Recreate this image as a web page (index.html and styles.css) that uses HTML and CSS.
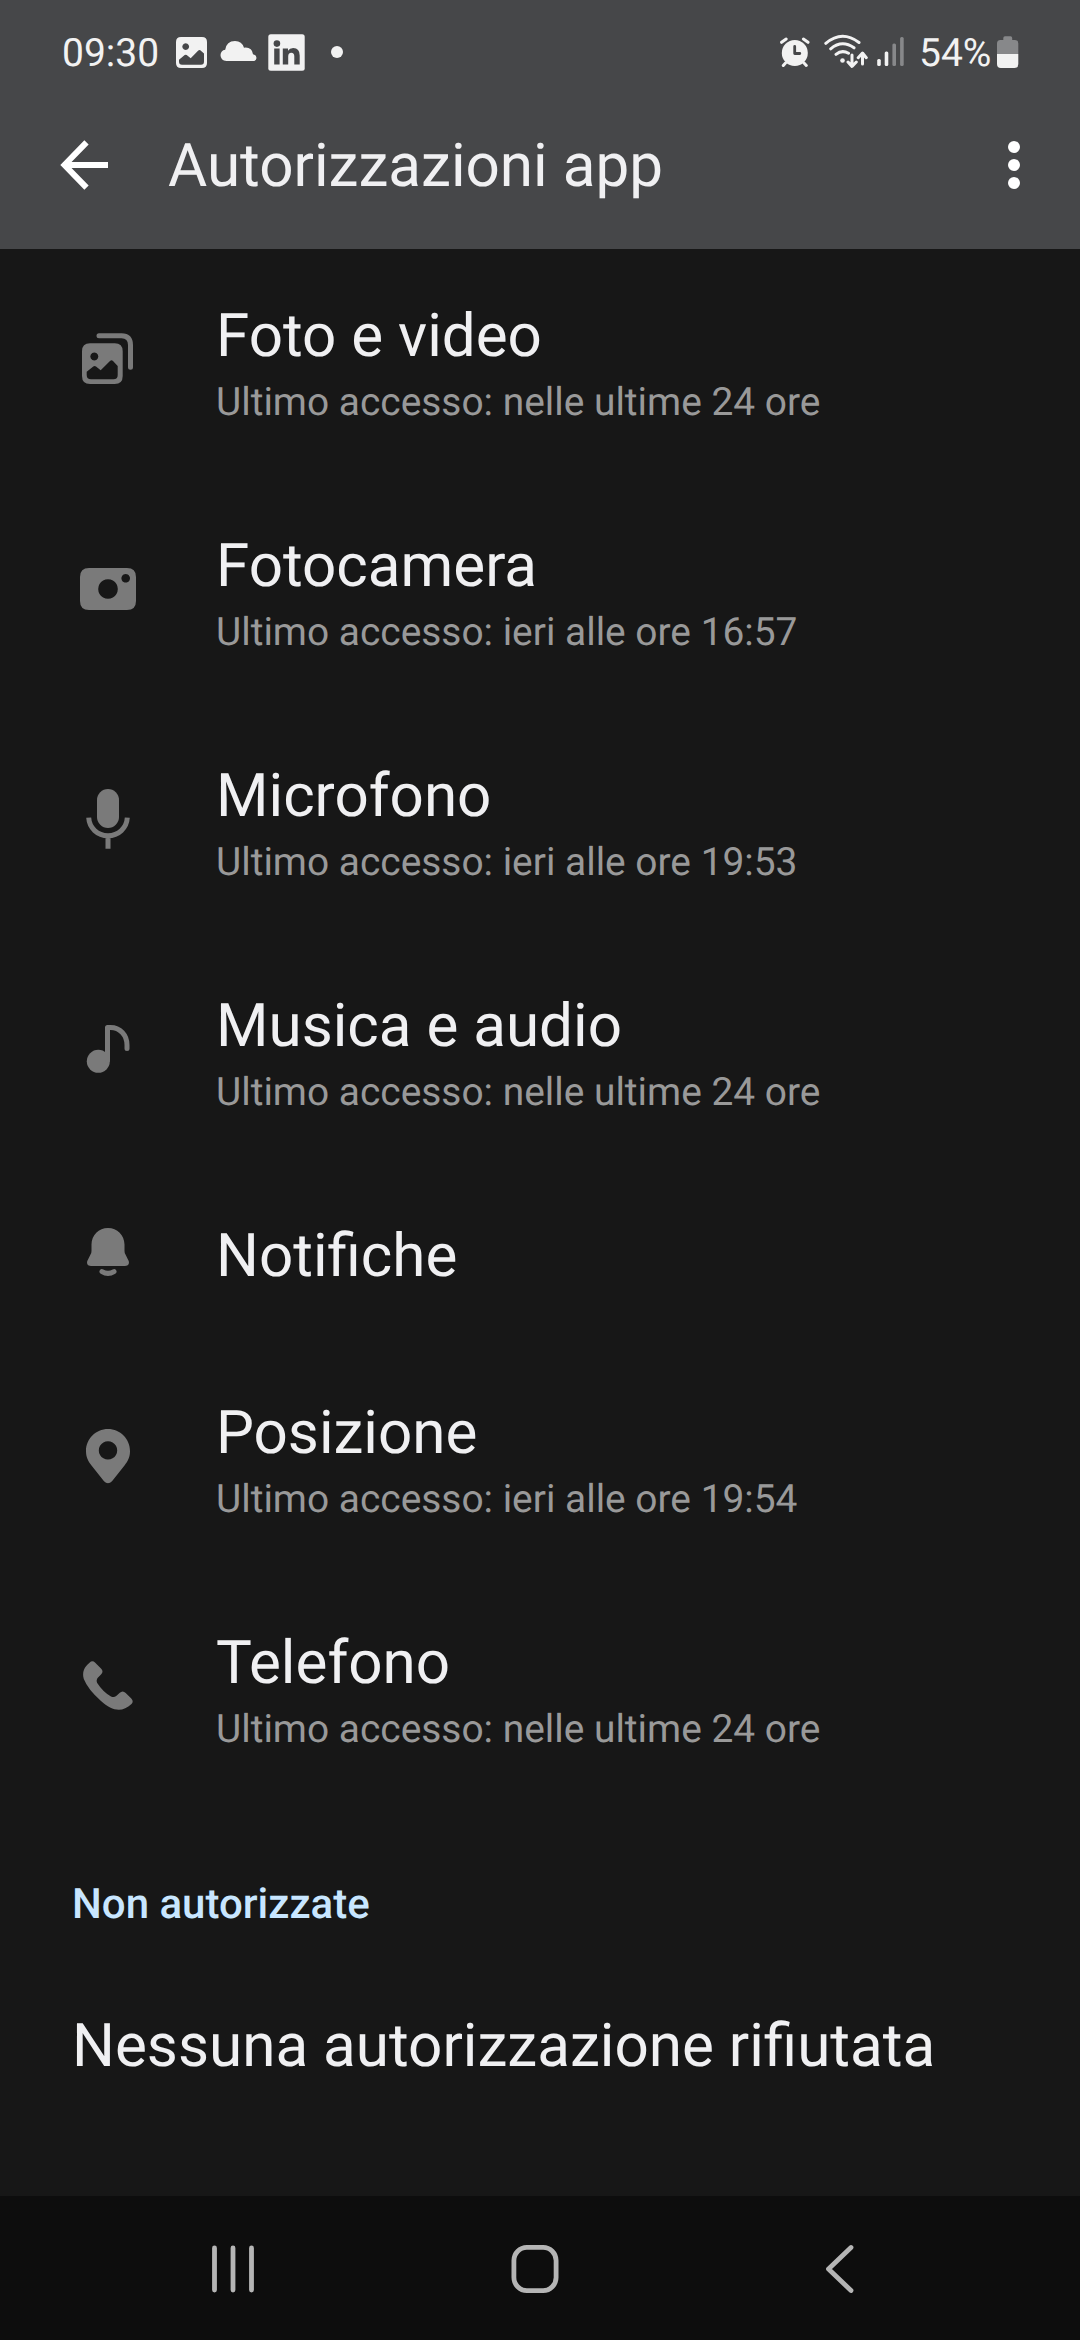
FILE: index.html
```html
<!DOCTYPE html>
<html lang="it">
<head>
<meta charset="utf-8">
<title>Autorizzazioni app</title>
<link rel="stylesheet" href="styles.css">
</head>
<body>
<div class="screen">
  <header class="top">
    <div class="status">
      <span class="clock">09:30</span>
      <svg class="st-image" width="31" height="40" viewBox="0 0 31 40"><path fill-rule="evenodd" d="M5 5H26Q31 5 31 10V31Q31 36 26 36H5Q0 36 0 31V10Q0 5 5 5ZM9.700 11.200a3.400 3.400 0 1 0 .01 0ZM3 27.800V29.500Q3 32.700 6 32.700H25Q28 32.700 28 29.500V21.500L24.300 18.200Q23.300 17.500 22.300 18.500L14.700 26.300L10.700 23Q9.700 22.300 8.700 23Z"/></svg>
      <svg class="st-cloud" width="37" height="40" viewBox="0 0 37 40"><path d="M6.500 29Q.5 28.500.5 23Q.8 18.500 5.200 17.800Q6.500 9 15 9Q22 9.200 24 15.700Q32 14.800 33 22.300Q36.500 23.200 36.500 26Q36.300 28.700 33.500 29Z"/></svg>
      <svg class="st-linkedin" width="37" height="40" viewBox="0 0 37 40"><rect x=".3" y="2.300" width="36.400" height="36.400" rx="2.500"/><circle class="cut" cx="8.900" cy="11.600" r="3.300"/><rect class="cut" x="6.200" y="16.500" width="5.400" height="16"/><path class="cut" d="M14.800 16.500H20V18.700Q21.600 16.100 25.200 16.100Q31.700 16.100 31.700 23.600V32.500H26.300V24.400Q26.300 20.700 23.300 20.700Q20.200 20.700 20.200 24.400V32.500H14.800Z"/></svg>
      <svg class="st-dot" width="12" height="40" viewBox="0 0 12 40"><circle cx="6" cy="20" r="6"/></svg>
      <svg class="st-alarm" width="30" height="40" viewBox="0 0 30 40"><circle cx="14.800" cy="21" r="13"/><path class="line w3" d="M1.600 10.300L6.200 7M28 10.300L23.400 7M5.500 31L3.300 33.500M24 31L26.300 33.500"/><path class="cut-line" d="M14.700 14.500V21.500H19.800"/></svg>
      <svg class="st-wifi" width="44" height="40" viewBox="0 0 44 40"><path class="line w3" d="M1.800 11.300Q18 -2.500 35 10.500M6.700 16.800Q18 7.300 30 15.800M12 22.300Q18 17.500 24.500 21.300"/><circle cx="18.500" cy="28.500" r="2.300"/><path class="line w3" d="M28 23V33.500M24 30L28 34.500L32.300 30M38.500 32V22M34.200 25.700L38.500 21L42.300 25.700"/></svg>
      <svg class="st-signal" width="28" height="40" viewBox="0 0 28 40"><rect x=".2" y="27" width="3.600" height="7" rx="1.500"/><rect x="7.700" y="19.500" width="3.600" height="14.500" rx="1.500"/><g class="dim"><rect x="15.400" y="11.500" width="3.600" height="22.500" rx="1.500"/><rect x="23.100" y="5" width="3.600" height="29" rx="1.500"/></g></svg>
      <span class="percent">54%</span>
      <svg class="st-battery" width="22" height="40" viewBox="0 0 22 40"><path class="dim" d="M6.300 8V6Q6.300 4.300 8 4.300H13.500Q15.200 4.300 15.200 6V8H18Q21.300 8 21.300 11.500V22H0V11.500Q0 8 3.300 8Z"/><path d="M0 22H21.300V32Q21.300 36 17.500 36H3.800Q0 36 0 32Z"/></svg>
    </div>
    <div class="appbar">
      <svg class="back" width="48" height="50" viewBox="0 0 48 50"><path d="M26.500 2.300L4.500 25L26.500 47.700M4.500 25H48"/></svg>
      <h1>Autorizzazioni app</h1>
      <svg class="more" width="12" height="50" viewBox="0 0 12 50"><circle cx="6" cy="7" r="6"/><circle cx="6" cy="25" r="6"/><circle cx="6" cy="43" r="6"/></svg>
    </div>
  </header>

  <main>
    <ul class="list">
      <li class="row">
        <svg class="icon" viewBox="0 0 72 72"><path class="stroke" d="M27 12.800H49.500Q58.500 13 58.500 22V44.300"/><path fill-rule="evenodd" d="M18 20.300H42.700Q50.700 20.300 50.700 28.300V53Q50.700 61 42.700 61H18Q10 61 10 53V28.300Q10 20.300 18 20.300ZM22.300 29.400a4 4 0 1 0 .01 0ZM14.700 48.700V52Q14.700 56.300 19 56.300H41.500Q45.700 56.300 45.700 52V43L41 38Q39.500 36.700 38 38L28.700 47.300L24 43.500Q22.700 42.500 21.300 43.500Z"/></svg>
        <div><h2>Foto e video</h2><p>Ultimo accesso: nelle ultime 24 ore</p></div>
      </li>
      <li class="row">
        <svg class="icon" viewBox="0 0 72 72"><path fill-rule="evenodd" d="M17 15H55Q64 15 64 24V48Q64 57 55 57H17Q8 57 8 48V24Q8 15 17 15ZM36 26.200a9.800 9.800 0 1 0 .01 0ZM53.700 21a4.300 4.300 0 1 0 .01 0Z"/></svg>
        <div><h2>Fotocamera</h2><p>Ultimo accesso: ieri alle ore 16:57</p></div>
      </li>
      <li class="row">
        <svg class="icon" viewBox="0 0 72 72"><rect x="25" y="6" width="22" height="39" rx="11"/><path class="stroke butt" d="M16.700 34.700C17.300 45 25.500 52.700 36 52.700S54.700 45 55.300 34.700M36 52V65.700"/></svg>
        <div><h2>Microfono</h2><p>Ultimo accesso: ieri alle ore 19:53</p></div>
      </li>
      <li class="row">
        <svg class="icon" viewBox="0 0 72 72"><circle cx="26.300" cy="48.300" r="11.500"/><path class="stroke" d="M35.500 47V14.400H38.500C48 14.400 55 22 55 32V35.500"/></svg>
        <div><h2>Musica e audio</h2><p>Ultimo accesso: nelle ultime 24 ore</p></div>
      </li>
      <li class="row single">
        <svg class="icon" viewBox="0 0 72 72"><path d="M36 11C45.200 11 52.500 18.400 52.500 27.600V34Q52.500 36 53.500 37.500L56.200 43C58 46 56.500 49 53 49H19C15.500 49 14 46 15.800 43L18.500 37.500Q19.500 36 19.500 34V27.600C19.500 18.400 26.800 11 36 11Z"/><path class="stroke" d="M30 54.600Q36 58.200 42 54.600"/></svg>
        <div><h2>Notifiche</h2></div>
      </li>
      <li class="row">
        <svg class="icon" viewBox="0 0 72 72"><path fill-rule="evenodd" d="M36 9C23.800 9 14 18.800 14 31C14 37 16 41 19.500 45.500L32 61.200Q36 65.300 40 61.200L52.500 45.500C56 41 58 37 58 31C58 18.800 48.200 9 36 9ZM36 21.200a9.200 9.200 0 1 1-.01 0Z"/></svg>
        <div><h2>Posizione</h2><p>Ultimo accesso: ieri alle ore 19:54</p></div>
      </li>
      <li class="row">
        <svg class="icon" viewBox="0 0 72 72"><path d="M17.500 12.800Q20.300 10 23 12.500L29 18.500Q32 21.500 29 24.500L26 27.500Q23.800 30 25.200 33Q31 42 39 46.500Q42 48 44.500 45.800L47.500 43Q50.700 40 53.700 43L59.300 48.500Q62 51.300 59.500 54C50 63 40 61 29 51Q16 39.500 11.800 29C10 22 12 17.500 17.500 12.800Z"/></svg>
        <div><h2>Telefono</h2><p>Ultimo accesso: nelle ultime 24 ore</p></div>
      </li>
    </ul>
    <h3>Non autorizzate</h3>
    <div class="empty">Nessuna autorizzazione rifiutata</div>
  </main>

  <nav class="nav">
    <svg width="48" height="52" viewBox="0 0 48 52"><path d="M5.500 5V47M24 5V47M42.500 5V47"/></svg>
    <svg width="48" height="52" viewBox="0 0 48 52"><rect x="2.900" y="4.400" width="42.200" height="43.200" rx="13"/></svg>
    <svg width="48" height="52" viewBox="0 0 48 52"><path d="M38 4.500L15.500 26L38 47.500"/></svg>
  </nav>
</div>
</body>
</html>
```
FILE: styles.css
```css
* { box-sizing: border-box; margin: 0; padding: 0; }

body {
  background: #171717;
  color: #f0f0f2;
  font-family: Roboto, sans-serif;
  font-weight: 400;
  text-rendering: geometricPrecision;
}

h1, h2, h3, p { font-weight: 400; }
ul { list-style: none; }
svg { display: block; flex: none; }

.screen {
  width: 1080px;
  height: 2340px;
  display: flex;
  flex-direction: column;
}

/* Status bar and app bar */
.top { height: 249px; background: #464749; }

.status {
  height: 104px;
  padding: 0 61px 0 62px;
  display: flex;
  align-items: center;
  fill: #f2f2f2;
  color: #f2f2f2;
  font-size: 39px;
  line-height: 46px;
}
.clock { width: 114px; padding-top: 1px; }
.st-cloud { margin-left: 13px; }
.st-linkedin { margin-left: 11px; }
.st-dot { margin-left: 26px; }
.st-alarm { margin-left: auto; }
.st-wifi { margin-left: 14px; }
.st-signal { margin-left: 9px; }
.percent { margin-left: 14px; padding-top: 1px; width: 78px; white-space: nowrap; }
.dim { fill: #87888a; }
.cut { fill: #464749; }
.line { fill: none; stroke: #f2f2f2; stroke-linecap: round; stroke-linejoin: round; }
.w3 { stroke-width: 3; }
.cut-line { fill: none; stroke: #464749; stroke-width: 2.8; stroke-linecap: round; stroke-linejoin: round; }

.appbar {
  height: 122px;
  padding: 0 60px;
  display: flex;
  align-items: center;
}
.back { fill: none; stroke: #fff; stroke-width: 6; }
.appbar h1 { margin-left: 60px; padding-top: 1px; font-size: 60.2px; line-height: 70px; }
.more { margin-left: auto; fill: #fff; }

/* Permission list */
main { flex: 1; }

.row {
  height: 230px;
  padding: 52px 72px 0;
  display: flex;
  align-items: flex-start;
  gap: 72px;
}
.row.single { height: 177px; }
.row h2 { font-size: 60.15px; line-height: 70px; }
.row p { margin-top: 9px; font-size: 38.9px; line-height: 46px; color: #999; }

.icon { width: 72px; height: 72px; margin-top: 22px; fill: #7a7a7a; }
.single .icon { margin-top: -4px; }
.stroke { fill: none; stroke: #7a7a7a; stroke-width: 5; stroke-linecap: round; stroke-linejoin: round; }
.butt { stroke-linecap: butt; }

h3 {
  padding: 74px 72px 0;
  font-size: 42px;
  line-height: 50px;
  font-weight: 500;
  color: #c8e6ff;
}
.empty { padding: 81px 72px 0; font-size: 60.2px; line-height: 70px; }

/* System navigation */
.nav {
  height: 144px;
  padding: 2px 219px 0 209px;
  background: #0d0d0d;
  display: flex;
  align-items: center;
  justify-content: space-between;
}
.nav svg { fill: none; stroke: #b5b5b5; stroke-width: 4.800; stroke-linecap: round; stroke-linejoin: round; }
```
